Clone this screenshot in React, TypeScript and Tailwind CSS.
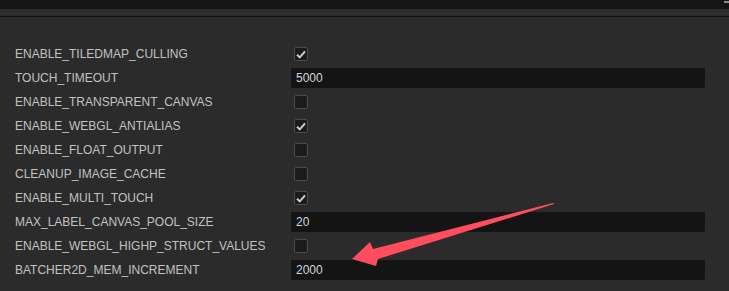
import React from 'react';

type Row = { name: string; kind: 'check' | 'text'; value?: string; checked?: boolean };

const rows: Row[] = [
  { name: 'ENABLE_TILEDMAP_CULLING', kind: 'check', checked: true },
  { name: 'TOUCH_TIMEOUT', kind: 'text', value: '5000' },
  { name: 'ENABLE_TRANSPARENT_CANVAS', kind: 'check', checked: false },
  { name: 'ENABLE_WEBGL_ANTIALIAS', kind: 'check', checked: true },
  { name: 'ENABLE_FLOAT_OUTPUT', kind: 'check', checked: false },
  { name: 'CLEANUP_IMAGE_CACHE', kind: 'check', checked: false },
  { name: 'ENABLE_MULTI_TOUCH', kind: 'check', checked: true },
  { name: 'MAX_LABEL_CANVAS_POOL_SIZE', kind: 'text', value: '20' },
  { name: 'ENABLE_WEBGL_HIGHP_STRUCT_VALUES', kind: 'check', checked: false },
  { name: 'BATCHER2D_MEM_INCREMENT', kind: 'text', value: '2000' },
];

function Checkbox({ checked }: { checked?: boolean }) {
  return (
    <div className="ml-[3px] w-[14px] h-[14px] rounded-[2px] border border-[#4a4a4a] bg-[#1b1b1b] flex items-center justify-center">
      {checked && (
        <svg width="10" height="9" viewBox="0 0 10 9">
          <path d="M1 4.8 L3.8 7.4 L9 1.4" fill="none" stroke="#cfcfcf" strokeWidth="2" />
        </svg>
      )}
    </div>
  );
}

export default function App() {
  return (
    <div className="relative w-[729px] h-[291px] overflow-hidden bg-[#2b2b2b] font-['Liberation_Sans',Arial,sans-serif]">
      {/* top bars */}
      <div className="relative h-[9px] bg-[#151515]">
        <div className="absolute right-0 top-[1px] w-[5px] h-[2px] bg-[#8a8a8a]" />
      </div>
      <div className="h-[7px] bg-[#2c2c2c]" />
      <div className="h-[1px] bg-[#0f0f0f]" />

      {/* settings list */}
      <div className="pt-[25px] pl-[15px] pr-[24px]">
        {rows.map((r) => (
          <div key={r.name} className="h-[24px] flex items-center">
            <div className="w-[276px] text-[12px] text-[#c2c2c2] leading-none whitespace-nowrap">{r.name}</div>
            {r.kind === 'check' ? (
              <Checkbox checked={r.checked} />
            ) : (
              <div className="flex-1 h-[20px] rounded-[2px] bg-[#141414] flex items-center pl-[5px] text-[12px] text-[#d4d4d4]">
                {r.value}
              </div>
            )}
          </div>
        ))}
      </div>

      {/* annotation arrow */}
      <svg className="absolute left-0 top-0 pointer-events-none" width="729" height="291">
        <polygon points="553,203 373,249 370,242 352,259 376,266 378,259 554,204" fill="#ff4d5e" />
      </svg>
    </div>
  );
}
